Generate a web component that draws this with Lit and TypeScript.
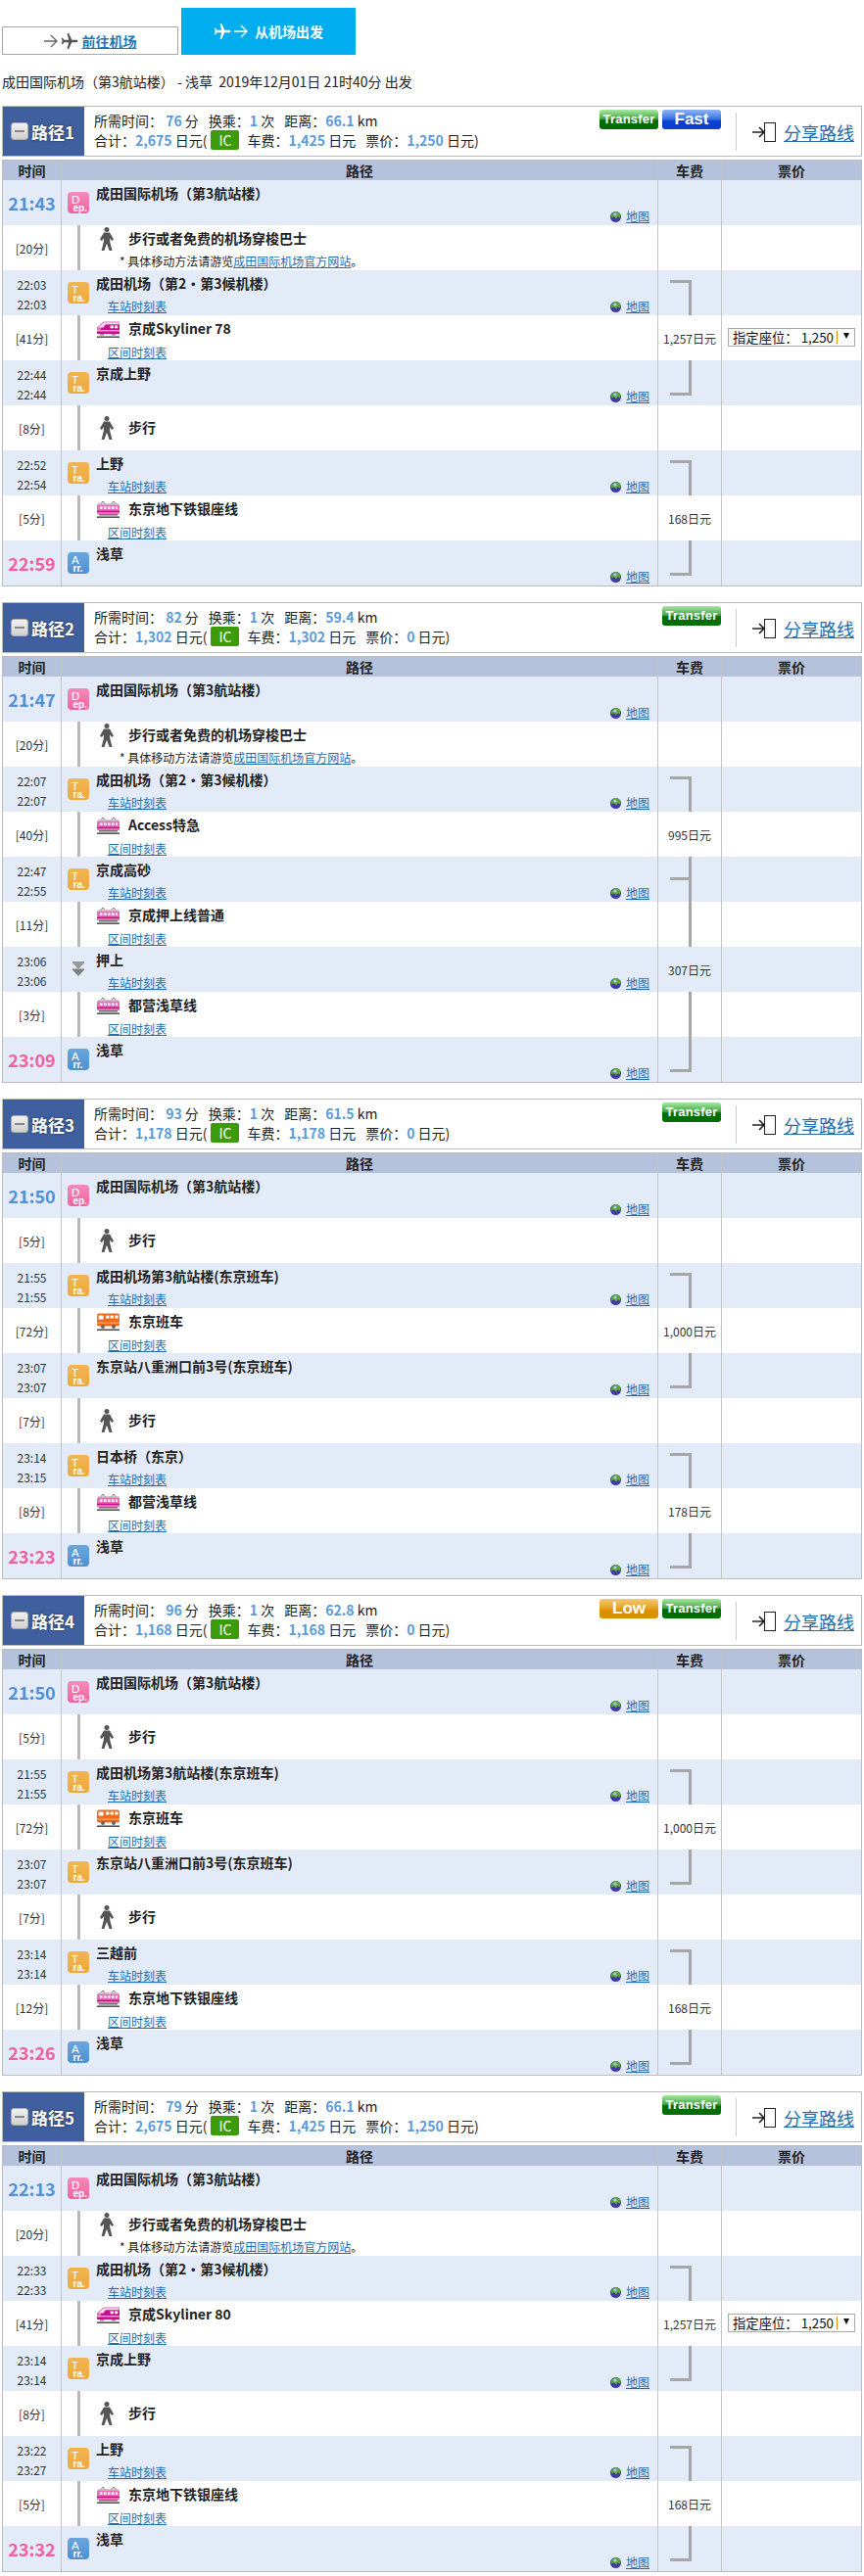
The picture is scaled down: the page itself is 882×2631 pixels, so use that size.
import { LitElement, html, css, svg, nothing } from 'lit';
import { customElement } from 'lit/decorators.js';

type Fare = 'top' | 'bottom' | 'mid' | 'line' | string | undefined;
interface Row {
  kind: 'dep' | 'arr' | 'tra' | 'pass' | 'walk' | 'train' | 'express' | 'bus';
  t1?: string;
  t2?: string;
  name: string;
  link?: boolean;
  note?: boolean;
  fare?: Fare;
  seat?: boolean;
}
interface Route {
  no: number;
  mins: number;
  dist: string;
  total: string;
  fee: string;
  ticket: string;
  tags: string[];
  rows: Row[];
}

const NARITA = '成田国际机场（第3航站楼）';
const NARITA2 = '成田机场（第2・第3候机楼）';
const SHUTTLE = '步行或者免费的机场穿梭巴士';

const dep = (t1: string, name = NARITA): Row => ({ kind: 'dep', t1, name });
const arr = (t1: string, fare?: Fare): Row => ({ kind: 'arr', t1, name: '浅草', fare });
const stop = (t1: string, t2: string, name: string, link: boolean, fare?: Fare): Row => ({ kind: 'tra', t1, t2, name, link, fare });
const walk = (t1: string, name = '步行', note = false): Row => ({ kind: 'walk', t1, name, note });
const ride = (kind: Row['kind'], t1: string, name: string, fare?: Fare, seat = false): Row => ({ kind, t1, name, fare, seat, link: true });

const routes: Route[] = [
  {
    no: 1, mins: 76, dist: '66.1', total: '2,675', fee: '1,425', ticket: '1,250', tags: ['Transfer', 'Fast'],
    rows: [
      dep('21:43'), walk('[20分]', SHUTTLE, true),
      stop('22:03', '22:03', NARITA2, true, 'top'), ride('express', '[41分]', '京成Skyliner 78', '1,257日元', true),
      stop('22:44', '22:44', '京成上野', false, 'bottom'), walk('[8分]'),
      stop('22:52', '22:54', '上野', true, 'top'), ride('train', '[5分]', '东京地下铁银座线', '168日元'),
      arr('22:59', 'bottom'),
    ],
  },
  {
    no: 2, mins: 82, dist: '59.4', total: '1,302', fee: '1,302', ticket: '0', tags: ['Transfer'],
    rows: [
      dep('21:47'), walk('[20分]', SHUTTLE, true),
      stop('22:07', '22:07', NARITA2, true, 'top'), ride('train', '[40分]', 'Access特急', '995日元'),
      stop('22:47', '22:55', '京成高砂', true, 'mid'), ride('train', '[11分]', '京成押上线普通', 'line'),
      { kind: 'pass', t1: '23:06', t2: '23:06', name: '押上', link: true, fare: '307日元' }, ride('train', '[3分]', '都营浅草线', 'line'),
      arr('23:09', 'bottom'),
    ],
  },
  {
    no: 3, mins: 93, dist: '61.5', total: '1,178', fee: '1,178', ticket: '0', tags: ['Transfer'],
    rows: [
      dep('21:50'), walk('[5分]'),
      stop('21:55', '21:55', '成田机场第3航站楼(东京班车)', true, 'top'), ride('bus', '[72分]', '东京班车', '1,000日元'),
      stop('23:07', '23:07', '东京站八重洲口前3号(东京班车)', false, 'bottom'), walk('[7分]'),
      stop('23:14', '23:15', '日本桥（东京）', true, 'top'), ride('train', '[8分]', '都营浅草线', '178日元'),
      arr('23:23', 'bottom'),
    ],
  },
  {
    no: 4, mins: 96, dist: '62.8', total: '1,168', fee: '1,168', ticket: '0', tags: ['Low', 'Transfer'],
    rows: [
      dep('21:50'), walk('[5分]'),
      stop('21:55', '21:55', '成田机场第3航站楼(东京班车)', true, 'top'), ride('bus', '[72分]', '东京班车', '1,000日元'),
      stop('23:07', '23:07', '东京站八重洲口前3号(东京班车)', false, 'bottom'), walk('[7分]'),
      stop('23:14', '23:14', '三越前', true, 'top'), ride('train', '[12分]', '东京地下铁银座线', '168日元'),
      arr('23:26', 'bottom'),
    ],
  },
  {
    no: 5, mins: 79, dist: '66.1', total: '2,675', fee: '1,425', ticket: '1,250', tags: ['Transfer'],
    rows: [
      dep('22:13'), walk('[20分]', SHUTTLE, true),
      stop('22:33', '22:33', NARITA2, true, 'top'), ride('express', '[41分]', '京成Skyliner 80', '1,257日元', true),
      stop('23:14', '23:14', '京成上野', false, 'bottom'), walk('[8分]'),
      stop('23:22', '23:27', '上野', true, 'top'), ride('train', '[5分]', '东京地下铁银座线', '168日元'),
      arr('23:32', 'bottom'),
    ],
  },
];

const plane = (fill: string) => html`<svg class="plane" viewBox="0 0 18 18"><path fill=${fill} d="M17.5 9c0-.8-1-1.3-2-1.3H11.3L8.2 1H6.6l1.5 6.7H3.4L2 5.8H.8L1.6 9 .8 12.2H2l1.4-1.9h4.7L6.6 17h1.6l3.1-6.7h4.2c1 0 2-.5 2-1.3z"/></svg>`;
const arrow = (stroke: string) => html`<svg class="arrow" viewBox="0 0 14 14"><path fill="none" stroke=${stroke} stroke-width="1.4" d="M0 7h13M7 1l6 6-6 6"/></svg>`;

const globe = html`<svg class="globe" viewBox="0 0 11 11">
  <circle cx="5.5" cy="5.5" r="5.5" fill="#4338a8"/>
  <path fill="#58a83c" d="M1 3.5C2 1.2 3.8 0 5.5 0c2 0 4 1.2 5 3.2L9.8 6.6 7.6 5.2 6.2 7.4 3.6 5.6 1 6.6z"/>
  <circle cx="5" cy="3" r="1.6" fill="#b9c4ee"/>
</svg>`;

const walker = html`<svg class="walker" viewBox="0 0 14 24">
  <circle cx="7" cy="2.6" r="2.5" fill="#555"/>
  <path fill="#555" d="M4 5.5h6L14 12.5l-1.8 1.4-2.2-2.6.3 4 2.2 8.7H9.6L7 16.8 4.4 24H1.6l2.2-8.7.3-4-2.3 2.6L0 12.5z"/>
</svg>`;

const expressIcon = html`<svg class="vehicle" viewBox="0 0 23 18">
  <path fill="#e86ab8" d="M0 14V7.4L6.6 1.4H23V14z"/>
  <path fill="#fbe3f2" d="M1.4 7.6l5.6-5h15.4v1.6H8.6L6 7.6z"/>
  <path fill="#c80f8c" d="M6.4 7.8L9 4.4h14v5.8H4V7.8z"/>
  <path fill="#fff" d="M13.6 5.4h3.2v2.8h-3.2zM18 5.4h3.2v2.8H18zM0 10.4h23v1H0z"/>
  <path fill="#c80f8c" d="M0 11.4h23V14H0z"/>
  <path fill="#888" d="M3 14h4v1.6H3zM15 14h4v1.6h-4z"/>
  <path fill="#555" d="M0 16.4h23V18H0z"/>
</svg>`;

const trainIcon = html`<svg class="vehicle" viewBox="0 0 23 18">
  <path fill="none" stroke="#777" d="M4 3.6l2-2.6 2 2.6M15 3.6l2-2.6 2 2.6"/>
  <path fill="#aaa" d="M1 3.4h21v1.2H1z"/>
  <path fill="#ef6cb8" d="M0 4.6h23V14H0z"/>
  <path fill="#fff" d="M3 6.4h2.6v2.4H3zM7 6.4h2.6v2.4H7zM11 6.4h2.6v2.4H11zM15 6.4h2.6v2.4H15zM19 6.4h2v2.4h-2z"/>
  <path fill="#c4108c" d="M0 10.6h23V12H0z"/>
  <path fill="#777" d="M2 14h19v1.6H2z"/>
  <path fill="#555" d="M0 16.4h23V18H0z"/>
</svg>`;

const busIcon = html`<svg class="vehicle" viewBox="0 0 23 18">
  <rect x="0" y="0.5" width="23" height="13" rx="2" fill="#ee6a1e"/>
  <path fill="#fff" d="M1.6 2.4h5v4h-5zM9 2.4h3.4v3H9zM13.6 2.4H17v3h-3.4zM18.2 2.4h3.4v3h-3.4z"/>
  <path fill="#ffb27a" d="M0 9.6h23v1H0z"/>
  <circle cx="6" cy="14" r="2" fill="#666"/>
  <circle cx="17" cy="14" r="2" fill="#666"/>
  <path fill="#555" d="M0 16.4h23V18H0z"/>
</svg>`;

const passIcon = html`<svg class="pass" viewBox="0 0 12 15">
  <path fill="#999" d="M0 0h12v1.4L6 8 0 1.4z"/>
  <path fill="#808080" d="M0 7.5h12v1L6 15 0 8.5z"/>
</svg>`;

const badge = (kind: string, big: string, small: string) => html`<svg class="badge ${kind}" viewBox="0 0 22 22">
  ${svg`<text x="4" y="11.5" font-size="11.5" fill="#fff" font-family="Liberation Sans, sans-serif">${big}</text>
  <text x="5.5" y="19.5" font-size="10" font-weight="700" fill="#fff" font-family="Liberation Sans, sans-serif">${small}</text>`}
</svg>`;

@customElement('app-root')
export class AppRoot extends LitElement {
  static styles = css`
    :host {
      display: block;
      font-family: 'Noto Sans CJK SC', sans-serif;
      font-size: 14px;
      color: #222;
      background: #fff;
    }
    a { color: #1f6cb0; text-decoration: underline; }
    .page { width: 878px; padding: 8px 2px 5px; }

    .tabs { display: flex; align-items: flex-end; gap: 3px; }
    .tab {
      box-sizing: border-box;
      display: flex;
      align-items: center;
      justify-content: center;
    }
    .tab-go { width: 180px; height: 29px; border: 1px solid #aaa; gap: 3px; }
    .tab-go a { font-weight: 700; color: #1a7ab8; margin-left: 1px; }
    .tab-from { width: 178px; height: 48px; background: #00aeef; color: #fff; font-weight: 700; gap: 3px; }
    .tab-from span { margin-left: 4px; }
    .plane { width: 18px; height: 18px; display: block; }
    .arrow { width: 14px; height: 14px; display: block; }

    .title { height: 52px; line-height: 54px; white-space: pre; }

    .route { margin-bottom: 16px; }
    .head {
      box-sizing: border-box;
      height: 52px;
      border: 1px solid #bbb;
      display: flex;
      margin-bottom: 3px;
    }
    .head-no {
      width: 83px;
      background: #3f5f9f;
      color: #fff;
      font-size: 17px;
      font-weight: 700;
      display: flex;
      align-items: center;
      padding-left: 8px;
      box-sizing: border-box;
      gap: 3px;
      text-shadow: 0 0 2px #222;
    }
    .minus {
      box-sizing: border-box;
      width: 18px;
      height: 18px;
      border-radius: 3px;
      border: 1px solid #aaa;
      background: linear-gradient(#f2f2f2, #cfcfcf);
      display: flex;
      align-items: center;
      justify-content: center;
    }
    .minus i { width: 10px; height: 2px; background: #888; display: block; }
    .sum { margin-left: 10px; padding-top: 4px; line-height: 20px; white-space: nowrap; }
    .sum b { color: #5b9bd9; font-weight: 700; }
    .sum .sp { margin-left: 10px; }
    .ic {
      display: inline-block;
      width: 29px;
      height: 20px;
      line-height: 20px;
      background: #3b9b08;
      color: #fff;
      text-align: center;
      border-radius: 2px;
      margin: 0 8px 0 4px;
      vertical-align: top;
    }
    .tags { margin-left: auto; display: flex; gap: 4px; padding-top: 3px; }
    .tag {
      box-sizing: border-box;
      width: 60px;
      height: 20px;
      border-radius: 3px;
      color: #fff;
      text-align: center;
      font-family: 'Liberation Sans', sans-serif;
      font-weight: 700;
      font-size: 13px;
      line-height: 20px;
      letter-spacing: 0.2px;
    }
    .tag-Transfer { background: linear-gradient(#a6e8a0 0, #4aa84a 45%, #006e00 55%, #006e00 100%); }
    .tag-Fast { background: linear-gradient(#8fb4f4 0, #3f78e4 45%, #0a3fd0 60%, #0a3fd0 100%); font-size: 17px; letter-spacing: 0; }
    .tag-Low { background: linear-gradient(#f4c872 0, #e6a52a 45%, #dc9000 60%, #dc9000 100%); font-size: 17px; letter-spacing: 0; }
    .share {
      display: flex;
      align-items: center;
      width: 128px;
      box-sizing: border-box;
      padding-left: 16px;
      margin: 6px 0 5px 15px;
      border-left: 1px solid #ccc;
    }
    .share a { font-size: 18px; margin-left: 8px; line-height: 26px; }
    .share svg { width: 24px; height: 20px; display: block; }

    table {
      width: 878px;
      box-sizing: border-box;
      border: 1px solid #bbb;
      border-collapse: separate;
      border-spacing: 0;
      table-layout: fixed;
    }
    th, td { padding: 0; border-right: 1px solid #c4c4c4; box-sizing: border-box; vertical-align: top; }
    th:last-child, td:last-child { border-right: none; }
    th { height: 20px; background: #b4c2dc; font-weight: 700; line-height: 20px; }
    td { height: 46px; }
    .c-time { width: 60px; }
    .c-path { width: 609px; }
    .c-fare { width: 65px; }
    tr.st td { background: #e4ebf8; }

    .time { text-align: center; font-size: 12px; color: #333; }
    .time .pair { padding-top: 5px; }
    .time .pair div { line-height: 20px; }
    .time .dur { line-height: 45px; padding-top: 1px; }
    .time .big { font-size: 18px; font-weight: 700; line-height: 46px; }
    .big.dep { color: #4f90d8; }
    .big.arr { color: #f0609f; }

    .cell { height: 46px; display: flex; overflow: hidden; }
    .mark { width: 22px; margin: 12px 7px 0 6px; flex: none; }
    .badge { width: 22px; height: 22px; display: block; border-radius: 4px; }
    .badge.dep { background: linear-gradient(#f48bbb, #ee62a0); }
    .badge.tra { background: linear-gradient(#f2b552, #ecaa3c); }
    .badge.arr { background: linear-gradient(#6aa6dc, #4f90cf); }
    .pass { width: 12px; height: 15px; display: block; margin: 3px 0 0 5px; }
    .info { flex: 1; min-width: 0; }
    .name { font-weight: 700; line-height: 26px; white-space: nowrap; }
    .links {
      display: flex;
      align-items: center;
      font-size: 12px;
      line-height: 20px;
      margin-top: 1px;
      padding: 0 8px 0 12px;
    }
    .map { margin-left: auto; display: flex; align-items: center; gap: 5px; }
    .globe { width: 11px; height: 11px; display: block; }

    .bar { width: 3px; height: 46px; margin-left: 16px; background: #b8b8b8; flex: none; }
    .move { margin-left: 17px; flex: 1; min-width: 0; }
    .move.plain { padding-top: 9px; }
    .move-head { display: flex; align-items: center; height: 26px; }
    .move-icon { width: 32px; flex: none; }
    .vehicle { width: 23px; height: 18px; display: block; margin-top: 1px; }
    .walker { width: 14px; height: 24px; display: block; margin: 1px 0 0 3px; }
    .move-sub { font-size: 12px; line-height: 20px; margin: 2px 0 0 11px; }
    .note { font-size: 12px; line-height: 20px; margin: 1px 0 0 23px; white-space: nowrap; }

    .fare { font-size: 12px; text-align: center; line-height: 45px; padding-top: 1px; color: #333; }
    .bk { box-sizing: border-box; width: 22px; margin-left: 12px; border: 0 solid #a6a6a6; }
    .bk-top { height: 36px; margin-top: 10px; border-top-width: 3px; border-right-width: 3px; }
    .bk-bottom { height: 36px; border-bottom-width: 3px; border-right-width: 3px; }
    .bk-line { height: 46px; border-right-width: 3px; }
    .bk-mid {
      height: 46px;
      border-right-width: 3px;
      background: linear-gradient(#a6a6a6, #a6a6a6) 0 21px / 100% 3px no-repeat;
    }
    .seat {
      box-sizing: border-box;
      width: 130px;
      height: 19px;
      margin: 13px 0 0 6px;
      border: 1px solid #aaa;
      background: #fff;
      display: flex;
      align-items: center;
      padding-left: 4px;
      font-size: 13.33px;
      line-height: 17px;
      white-space: pre;
      color: #111;
    }
    .seat .caret { width: 1px; height: 13px; background: #e08a00; margin-left: 3px; }
    .seat .drop {
      width: 0;
      height: 0;
      margin: -3px 0 0 6px;
      border: 3px solid transparent;
      border-top: 6px solid #111;
      border-bottom: 0;
    }
  `;

  renderHead(r: Route) {
    return html`
      <div class="head">
        <div class="head-no"><span class="minus"><i></i></span>路径${r.no}</div>
        <div class="sum">
          <div>所需时间： <b>${r.mins}</b> 分<span class="sp">换乘：</span><b>1</b> 次<span class="sp">距离：</span><b>${r.dist}</b> km</div>
          <div>合计：<b>${r.total}</b> 日元(<span class="ic">IC</span>车费：<b>${r.fee}</b> 日元<span class="sp">票价：</span><b>${r.ticket}</b> 日元)</div>
        </div>
        <div class="tags">${r.tags.map(t => html`<div class="tag tag-${t}">${t}</div>`)}</div>
        <div class="share">
          <svg viewBox="0 0 24 20">
            <path fill="none" stroke="#222" stroke-width="1.6" d="M0 10h12M7 5l5 5-5 5"/>
            <rect x="12.5" y="0.5" width="11" height="19" fill="#fff" stroke="#222"/>
          </svg>
          <a href="#">分享路线</a>
        </div>
      </div>
    `;
  }

  renderTime(row: Row) {
    if (row.kind === 'dep') return html`<div class="big dep">${row.t1}</div>`;
    if (row.kind === 'arr') return html`<div class="big arr">${row.t1}</div>`;
    if (row.t2) return html`<div class="pair"><div>${row.t1}</div><div>${row.t2}</div></div>`;
    return html`<div class="dur">${row.t1}</div>`;
  }

  renderMark(kind: Row['kind']) {
    if (kind === 'dep') return badge('dep', 'D', 'ep.');
    if (kind === 'arr') return badge('arr', 'A', 'rr.');
    if (kind === 'tra') return badge('tra', 'T', 'ra.');
    return passIcon;
  }

  renderPath(row: Row) {
    if (row.kind === 'walk' || row.kind === 'train' || row.kind === 'express' || row.kind === 'bus') {
      const icon = row.kind === 'walk' ? walker : row.kind === 'express' ? expressIcon : row.kind === 'bus' ? busIcon : trainIcon;
      const plain = row.kind === 'walk' && !row.note;
      return html`
        <div class="cell">
          <div class="bar"></div>
          <div class="move ${plain ? 'plain' : ''}">
            <div class="move-head"><div class="move-icon">${icon}</div><div class="name">${row.name}</div></div>
            ${row.note ? html`<div class="note">* 具体移动方法请游览<a href="#">成田国际机场官方网站</a>。</div>` : nothing}
            ${row.link ? html`<div class="move-sub"><a href="#">区间时刻表</a></div>` : nothing}
          </div>
        </div>
      `;
    }
    return html`
      <div class="cell">
        <div class="mark">${this.renderMark(row.kind)}</div>
        <div class="info">
          <div class="name">${row.name}</div>
          <div class="links">
            ${row.link ? html`<a href="#">车站时刻表</a>` : nothing}
            <span class="map">${globe}<a href="#">地图</a></span>
          </div>
        </div>
      </div>
    `;
  }

  renderFare(fare: Fare) {
    if (!fare) return nothing;
    if (fare === 'top' || fare === 'bottom' || fare === 'mid' || fare === 'line') {
      return html`<div class="bk bk-${fare}"></div>`;
    }
    return html`<div class="fare">${fare}</div>`;
  }

  renderTable(r: Route) {
    return html`
      <table>
        <thead>
          <tr>
            <th class="c-time">时间</th>
            <th class="c-path">路径</th>
            <th class="c-fare">车费</th>
            <th>票价</th>
          </tr>
        </thead>
        <tbody>
          ${r.rows.map((row, i) => html`
            <tr class=${i % 2 === 0 ? 'st' : ''}>
              <td class="time">${this.renderTime(row)}</td>
              <td>${this.renderPath(row)}</td>
              <td>${this.renderFare(row.fare)}</td>
              <td>${row.seat ? html`<div class="seat">指定座位： 1,250<span class="caret"></span><span class="drop"></span></div>` : nothing}</td>
            </tr>
          `)}
        </tbody>
      </table>
    `;
  }

  render() {
    return html`
      <div class="page">
        <div class="tabs">
          <div class="tab tab-go">${arrow('#666')}${plane('#555')}<a href="#">前往机场</a></div>
          <div class="tab tab-from">${plane('#fff')}${arrow('#fff')}<span>从机场出发</span></div>
        </div>
        <div class="title">成田国际机场（第3航站楼） - 浅草  2019年12月01日 21时40分 出发</div>
        ${routes.map(r => html`<div class="route">${this.renderHead(r)}${this.renderTable(r)}</div>`)}
      </div>
    `;
  }
}
